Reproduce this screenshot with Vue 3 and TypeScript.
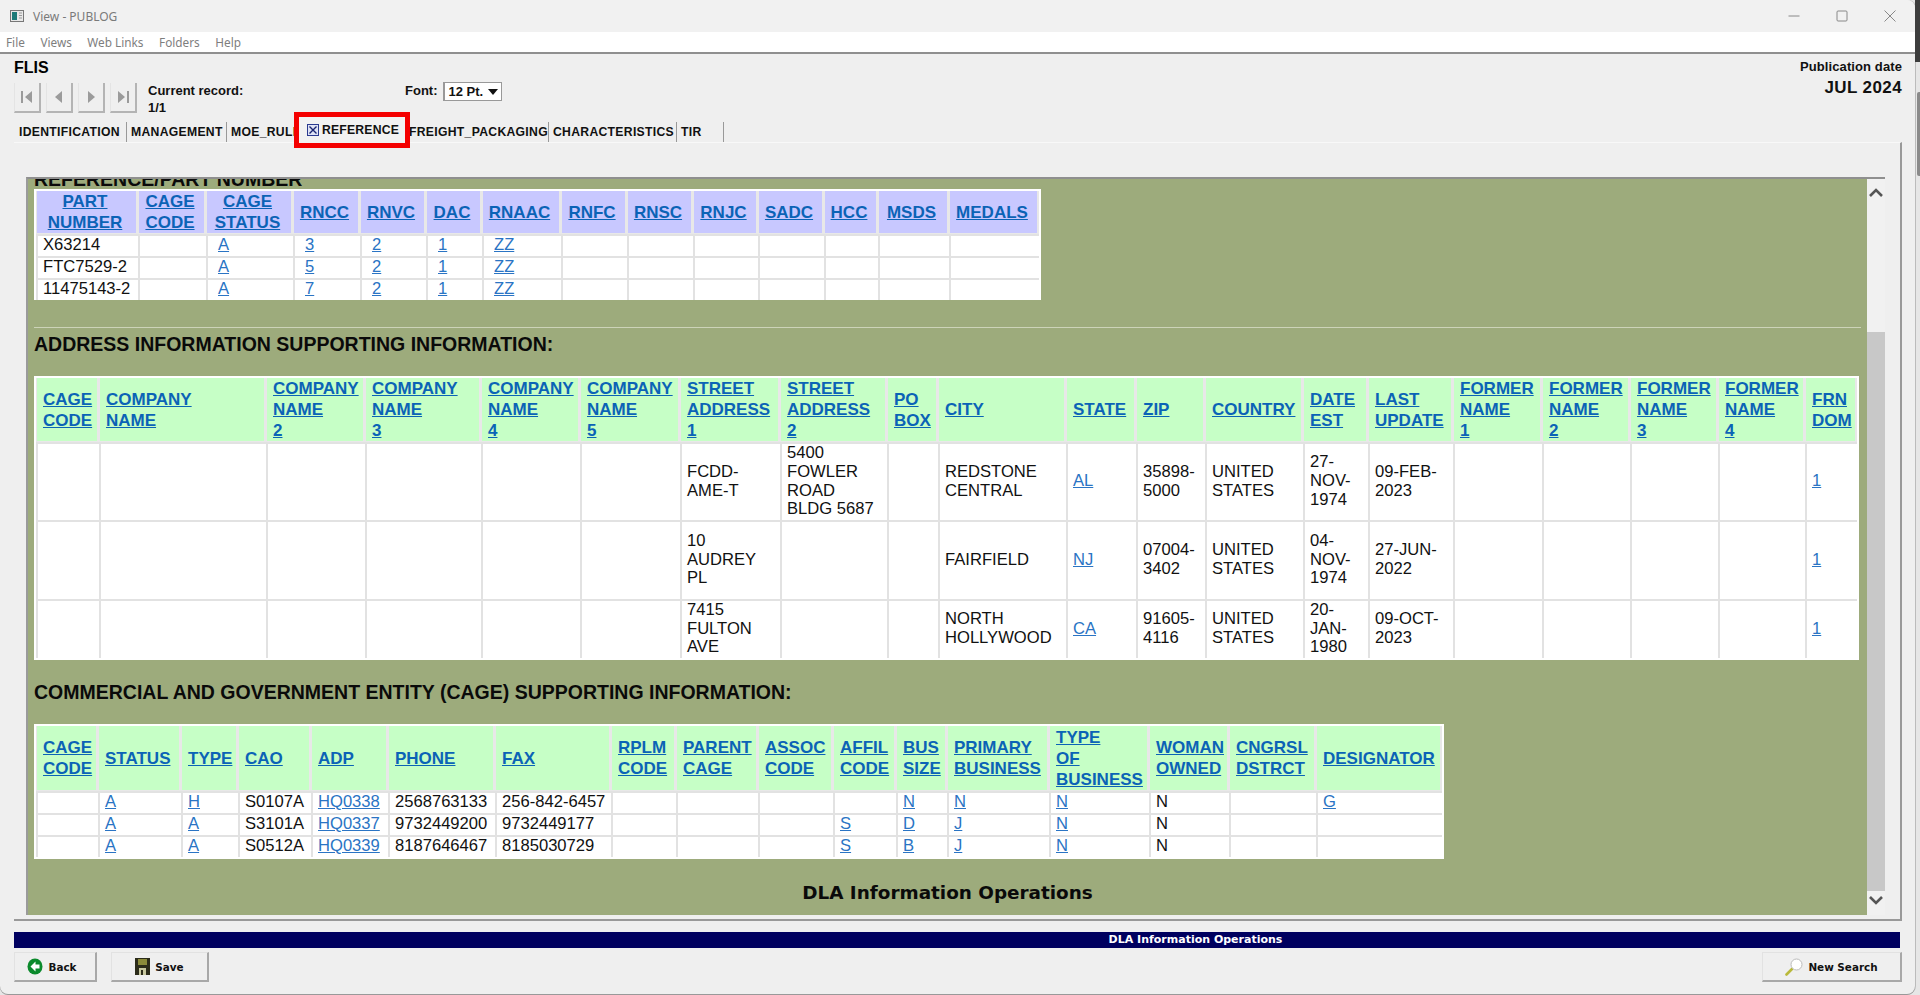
<script setup lang="ts">
interface Col {
  label: string
  width: number
  link?: boolean
}

interface Section {
  title: string
  theme: 'blue' | 'green'
  clipped?: boolean
  headHeight: number
  rowHeights: number[]
  cols: Col[]
  rows: string[][]
}

const menus = ['File', 'Views', 'Web Links', 'Folders', 'Help']

const tabsBefore = [
  { label: 'IDENTIFICATION', width: 108 },
  { label: 'MANAGEMENT', width: 96 }
]

const tabsAfter = [
  { label: 'FREIGHT_PACKAGING', width: 140 },
  { label: 'CHARACTERISTICS', width: 124 },
  { label: 'TIR', width: 43 }
]

const sections: Section[] = [
  {
    title: 'REFERENCE/PART NUMBER',
    theme: 'blue',
    clipped: true,
    headHeight: 43,
    rowHeights: [22, 22, 22],
    cols: [
      { label: 'PART\nNUMBER', width: 102 },
      { label: 'CAGE\nCODE', width: 68 },
      { label: 'CAGE\nSTATUS', width: 87, link: true },
      { label: 'RNCC', width: 67, link: true },
      { label: 'RNVC', width: 66, link: true },
      { label: 'DAC', width: 56, link: true },
      { label: 'RNAAC', width: 79, link: true },
      { label: 'RNFC', width: 66 },
      { label: 'RNSC', width: 66 },
      { label: 'RNJC', width: 65 },
      { label: 'SADC', width: 66 },
      { label: 'HCC', width: 54 },
      { label: 'MSDS', width: 71 },
      { label: 'MEDALS', width: 90 }
    ],
    rows: [
      ['X63214', '', 'A', '3', '2', '1', 'ZZ', '', '', '', '', '', '', ''],
      ['FTC7529-2', '', 'A', '5', '2', '1', 'ZZ', '', '', '', '', '', '', ''],
      ['11475143-2', '', 'A', '7', '2', '1', 'ZZ', '', '', '', '', '', '', '']
    ]
  },
  {
    title: 'ADDRESS INFORMATION SUPPORTING INFORMATION:',
    theme: 'green',
    headHeight: 64,
    rowHeights: [78, 79, 59],
    cols: [
      { label: 'CAGE\nCODE', width: 63 },
      { label: 'COMPANY\nNAME', width: 167 },
      { label: 'COMPANY\nNAME\n2', width: 99 },
      { label: 'COMPANY\nNAME\n3', width: 116 },
      { label: 'COMPANY\nNAME\n4', width: 99 },
      { label: 'COMPANY\nNAME\n5', width: 100 },
      { label: 'STREET\nADDRESS\n1', width: 100 },
      { label: 'STREET\nADDRESS\n2', width: 107 },
      { label: 'PO\nBOX', width: 51 },
      { label: 'CITY', width: 128 },
      { label: 'STATE', width: 70, link: true },
      { label: 'ZIP', width: 69 },
      { label: 'COUNTRY', width: 98 },
      { label: 'DATE\nEST', width: 65 },
      { label: 'LAST\nUPDATE', width: 85 },
      { label: 'FORMER\nNAME\n1', width: 89 },
      { label: 'FORMER\nNAME\n2', width: 88 },
      { label: 'FORMER\nNAME\n3', width: 88 },
      { label: 'FORMER\nNAME\n4', width: 87 },
      { label: 'FRN\nDOM', width: 52, link: true }
    ],
    rows: [
      ['', '', '', '', '', '', 'FCDD-\nAME-T', '5400\nFOWLER\nROAD\nBLDG 5687', '', 'REDSTONE\nCENTRAL', 'AL', '35898-\n5000', 'UNITED\nSTATES', '27-\nNOV-\n1974', '09-FEB-\n2023', '', '', '', '', '1'],
      ['', '', '', '', '', '', '10\nAUDREY\nPL', '', '', 'FAIRFIELD', 'NJ', '07004-\n3402', 'UNITED\nSTATES', '04-\nNOV-\n1974', '27-JUN-\n2022', '', '', '', '', '1'],
      ['', '', '', '', '', '', '7415\nFULTON\nAVE', '', '', 'NORTH\nHOLLYWOOD', 'CA', '91605-\n4116', 'UNITED\nSTATES', '20-\nJAN-\n1980', '09-OCT-\n2023', '', '', '', '', '1']
    ]
  },
  {
    title: 'COMMERCIAL AND GOVERNMENT ENTITY (CAGE) SUPPORTING INFORMATION:',
    theme: 'green',
    headHeight: 65,
    rowHeights: [22, 22, 22],
    cols: [
      { label: 'CAGE\nCODE', width: 62 },
      { label: 'STATUS', width: 83, link: true },
      { label: 'TYPE', width: 57, link: true },
      { label: 'CAO', width: 73 },
      { label: 'ADP', width: 77, link: true },
      { label: 'PHONE', width: 107 },
      { label: 'FAX', width: 116 },
      { label: 'RPLM\nCODE', width: 65 },
      { label: 'PARENT\nCAGE', width: 82 },
      { label: 'ASSOC\nCODE', width: 75 },
      { label: 'AFFIL\nCODE', width: 63, link: true },
      { label: 'BUS\nSIZE', width: 51, link: true },
      { label: 'PRIMARY\nBUSINESS', width: 102, link: true },
      { label: 'TYPE\nOF\nBUSINESS', width: 100, link: true },
      { label: 'WOMAN\nOWNED', width: 80 },
      { label: 'CNGRSL\nDSTRCT', width: 87 },
      { label: 'DESIGNATOR', width: 126, link: true }
    ],
    rows: [
      ['', 'A', 'H', 'S0107A', 'HQ0338', '2568763133', '256-842-6457', '', '', '', '', 'N', 'N', 'N', 'N', '', 'G'],
      ['', 'A', 'A', 'S3101A', 'HQ0337', '9732449200', '9732449177', '', '', '', 'S', 'D', 'J', 'N', 'N', '', ''],
      ['', 'A', 'A', 'S0512A', 'HQ0339', '8187646467', '8185030729', '', '', '', 'S', 'B', 'J', 'N', 'N', '', '']
    ]
  }
]

const tableWidth = (s: Section) => s.cols.reduce((sum, c) => sum + c.width, 0) + 4
</script>

<template>
  <div class="screen">
    <div class="window">
      <header class="titlebar">
        <svg class="app-icon" width="14" height="14" viewBox="0 0 14 14">
          <rect x="0.5" y="1.5" width="13" height="11" fill="#e8e8e8" stroke="#777" />
          <rect x="2" y="3" width="5" height="8" fill="#1c7a78" />
          <path d="M9 4h3M9 6.5h3M9 9h3" stroke="#999" />
        </svg>
        <span class="app-title">View - PUBLOG</span>
        <div class="win-controls">
          <svg width="12" height="12" viewBox="0 0 12 12"><path d="M0.5 6h11" stroke="#888" /></svg>
          <svg width="12" height="12" viewBox="0 0 12 12"><rect x="1" y="1" width="10" height="10" rx="1" fill="none" stroke="#888" /></svg>
          <svg width="12" height="12" viewBox="0 0 12 12"><path d="M0.5 0.5l11 11M11.5 0.5l-11 11" stroke="#888" /></svg>
        </div>
      </header>

      <nav class="menubar">
        <span v-for="m in menus" :key="m">{{ m }}</span>
      </nav>

      <div class="head">
        <div class="head-left">
          <div class="flis">FLIS</div>
          <div class="toolbar">
            <div class="nav-buttons">
              <button class="nav-btn">
                <svg width="16" height="16" viewBox="0 0 16 16"><path d="M2 2h2v12H2zM13 2v12L6 8z" fill="#9b9b9b" /></svg>
              </button>
              <button class="nav-btn">
                <svg width="16" height="16" viewBox="0 0 16 16"><path d="M11 2v12L4 8z" fill="#9b9b9b" /></svg>
              </button>
              <button class="nav-btn">
                <svg width="16" height="16" viewBox="0 0 16 16"><path d="M5 2v12l7-6z" fill="#9b9b9b" /></svg>
              </button>
              <button class="nav-btn">
                <svg width="16" height="16" viewBox="0 0 16 16"><path d="M3 2v12l7-6zM12 2h2v12h-2z" fill="#9b9b9b" /></svg>
              </button>
            </div>
            <div class="record">
              <div>Current record:</div>
              <div>1/1</div>
            </div>
            <label class="font-pick">
              Font:
              <span class="select">12 Pt.<i class="caret"></i></span>
            </label>
          </div>
        </div>
        <div class="pub">
          <div class="pub-label">Publication date</div>
          <div class="pub-date">JUL 2024</div>
        </div>
      </div>

      <div class="tabs">
        <span v-for="t in tabsBefore" :key="t.label" class="tab" :style="{ width: t.width + 'px' }">{{ t.label }}</span>
        <span class="tab tab-cut">MOE_RULE</span>
        <span class="tab-active">
          <svg width="12" height="12" viewBox="0 0 12 12">
            <rect x="0.5" y="0.5" width="11" height="11" fill="#dfe3f5" stroke="#2a3a90" />
            <path d="M2.5 2.5l7 7M9.5 2.5l-7 7" stroke="#1a2470" stroke-width="1.4" />
          </svg>
          REFERENCE
        </span>
        <span v-for="t in tabsAfter" :key="t.label" class="tab" :style="{ width: t.width + 'px' }">{{ t.label }}</span>
      </div>

      <section class="pane">
        <div class="scroller">
          <div class="sheet">
            <template v-for="(s, i) in sections" :key="s.title">
              <hr v-if="i === 1" class="rule" />
              <h2 class="sec-title" :class="{ clipped: s.clipped }">{{ s.title }}</h2>
              <table class="grid" :class="s.theme" :style="{ width: tableWidth(s) + 'px' }">
                <colgroup>
                  <col v-for="c in s.cols" :key="c.label" :style="{ width: c.width + 'px' }" />
                </colgroup>
                <thead>
                  <tr :style="{ height: s.headHeight + 'px' }">
                    <th v-for="c in s.cols" :key="c.label"><a>{{ c.label }}</a></th>
                  </tr>
                </thead>
                <tbody>
                  <tr v-for="(r, ri) in s.rows" :key="ri" :style="{ height: s.rowHeights[ri] + 'px' }">
                    <td v-for="(v, ci) in r" :key="ci">
                      <a v-if="s.cols[ci].link">{{ v }}</a>
                      <template v-else>{{ v }}</template>
                    </td>
                  </tr>
                </tbody>
              </table>
            </template>
            <div class="sheet-foot">DLA Information Operations</div>
          </div>
          <div class="vscroll">
            <svg class="arrow-up" width="16" height="10" viewBox="0 0 16 10"><path d="M2 8l6-6 6 6" fill="none" stroke="#555" stroke-width="2.6" /></svg>
            <div class="thumb"></div>
            <svg class="arrow-down" width="16" height="10" viewBox="0 0 16 10"><path d="M2 2l6 6 6-6" fill="none" stroke="#555" stroke-width="2.6" /></svg>
          </div>
        </div>
      </section>

      <div class="statusbar">DLA Information Operations</div>

      <footer class="actions">
        <button class="act back">
          <svg width="16" height="17" viewBox="0 0 16 17">
            <ellipse cx="8" cy="8.5" rx="7.5" ry="8" fill="#0b8a2c" />
            <path d="M8.5 3.5L3.5 8.5l5 5v-3h4v-4h-4z" fill="#fff" />
          </svg>
          Back
        </button>
        <button class="act save">
          <svg width="15" height="17" viewBox="0 0 15 17">
            <rect width="15" height="17" fill="#2b2b1a" />
            <rect x="3" y="1" width="9" height="6" fill="#8a8a3a" />
            <rect x="4" y="10" width="7" height="7" fill="#c8c8a0" />
            <rect x="6" y="12" width="2" height="5" fill="#2b2b1a" />
          </svg>
          Save
        </button>
        <button class="act search">
          <svg width="18" height="18" viewBox="0 0 18 18">
            <path d="M7 11l-5.5 5.5" stroke="#b9b93a" stroke-width="2.6" stroke-linecap="round" />
            <circle cx="11.5" cy="6.5" r="5.5" fill="#fff" stroke="#bbb" />
          </svg>
          New Search
        </button>
      </footer>
    </div>

    <aside class="desk-edge">
      <div class="desk-dark"></div>
      <div class="desk-thumb"></div>
    </aside>
  </div>
</template>

<style scoped>
.screen {
  display: flex;
  width: 1920px;
  height: 995px;
  background: #e6e6e6;
  overflow: hidden;
  font-family: "Liberation Sans", Arial, sans-serif;
  color: #111;
}

.window {
  width: 1915px;
  height: 994px;
  background: #efefef;
  border-radius: 0 8px 8px 8px;
  box-shadow: 0 1px 0 #999, 1px 0 0 #bbb;
  display: flex;
  flex-direction: column;
}

.titlebar {
  height: 32px;
  flex: none;
  display: flex;
  align-items: center;
  padding-left: 10px;
  background: #f1f1f1;
  border-radius: 0 8px 0 0;
}

.app-title {
  margin-left: 9px;
  font: 12px "Noto Sans", sans-serif;
  color: #7a7a7a;
}

.win-controls {
  margin-left: auto;
  display: flex;
  gap: 36px;
  padding-right: 19px;
}

.menubar {
  height: 20px;
  flex: none;
  box-sizing: content-box;
  background: #fff;
  border-bottom: 2px solid #8f8f8f;
  display: flex;
  align-items: center;
  gap: 15.5px;
  padding-left: 6px;
  font: 11.8px "Noto Sans", sans-serif;
  color: #7e7e7e;
}

.head {
  flex: none;
  height: 68px;
  display: flex;
  justify-content: space-between;
  padding: 4px 13px 0 14px;
  box-sizing: border-box;
  font-weight: bold;
}

.flis {
  font-size: 16px;
  line-height: 20px;
  color: #000;
}

.toolbar {
  display: flex;
  margin-top: 5px;
}

.nav-buttons {
  display: flex;
  gap: 5px;
  width: 134px;
}

.nav-btn {
  width: 27px;
  height: 30px;
  padding: 0;
  background: #efefef;
  border: 0;
  border-right: 2px solid #b4b4b4;
  border-bottom: 2px solid #b4b4b4;
  border-left: 1px solid #e4e4e4;
  display: flex;
  align-items: center;
  justify-content: center;
}

.record {
  font-size: 13px;
  line-height: 17px;
  margin-top: -1px;
  color: #111;
  width: 257px;
}

.font-pick {
  display: flex;
  align-items: flex-start;
  gap: 6px;
  font-size: 13px;
  line-height: 17px;
  margin-top: -1px;
}

.select {
  display: flex;
  align-items: center;
  justify-content: space-between;
  width: 59px;
  height: 19px;
  box-sizing: border-box;
  padding: 0 3px 0 3px;
  background: #fff;
  border: 1px solid #999;
  border-left-width: 2px;
}

.caret {
  width: 0;
  height: 0;
  border-left: 5px solid transparent;
  border-right: 5px solid transparent;
  border-top: 6px solid #111;
}

.pub {
  text-align: right;
}

.pub-label {
  font-size: 13px;
  line-height: 17px;
  letter-spacing: 0.1px;
}

.pub-date {
  font-size: 17px;
  line-height: 20px;
  margin-top: 3px;
  letter-spacing: 0.4px;
}

.tabs {
  flex: none;
  height: 20px;
  display: flex;
  align-items: center;
  margin-left: 19px;
  font-size: 12.2px;
  font-weight: bold;
  letter-spacing: 0.3px;
  color: #111;
}

.tab {
  flex: none;
  height: 20px;
  line-height: 20px;
  box-sizing: border-box;
  margin-right: 4px;
  border-right: 1px solid #999;
  white-space: nowrap;
}

.tab-cut {
  width: 63px;
  margin: 0;
  border: 0;
  overflow: hidden;
}

.tab-active {
  flex: none;
  width: 116px;
  height: 36px;
  box-sizing: border-box;
  border: 5px solid #f40000;
  background: #f2f2f2;
  display: flex;
  align-items: center;
  gap: 3px;
  padding-left: 8px;
  margin-right: -1px;
  margin-bottom: 4px;
  position: relative;
  z-index: 1;
  white-space: nowrap;
  font-size: 12.2px;
  letter-spacing: 0.2px;
}

.pane {
  flex: none;
  height: 779px;
  box-sizing: border-box;
  margin-left: 14px;
  width: 1888px;
  padding: 34px 15px 4px 12px;
  border-top: 1px solid #f8f8f8;
  border-right: 2px solid #999;
  border-bottom: 2px solid #999;
}

.scroller {
  height: 100%;
  display: flex;
  border-top: 2px solid #8f8f8f;
  border-left: 2px solid #9a9a9a;
  box-sizing: border-box;
}

.sheet {
  flex: 1;
  min-width: 0;
  background: #9dab7c;
  padding-left: 6px;
  overflow: hidden;
}

.sec-title {
  margin: 0 0 20px;
  height: 24px;
  line-height: 24px;
  font-size: 19.5px;
  font-weight: bold;
  color: #0a0a0a;
}

.sec-title.clipped {
  margin-top: -12px;
  margin-bottom: -2px;
}

.rule {
  margin: 27px 6px 4px 0;
  border: 0;
  height: 1px;
  background: #ccd3b8;
}

.grid {
  table-layout: fixed;
  border-collapse: separate;
  border-spacing: 0;
  background: #fff;
  border: 2px solid #fff;
  box-sizing: border-box;
  margin-bottom: 20px;
}

.grid.blue {
  border-bottom-width: 0;
}

.grid th,
.grid td {
  box-sizing: border-box;
  padding: 0 3px 0 5px;
  vertical-align: middle;
  white-space: pre-line;
  overflow: hidden;
}

.grid th {
  font-size: 17px;
  line-height: 21px;
  font-weight: bold;
  text-align: left;
  padding-left: 6px;
  padding-right: 2px;
  border: 1px solid #e8e8e8;
  border-width: 0 2px 1px 1px;
}

.grid.blue th {
  background: #c8c8ff;
  text-align: center;
  padding: 0 6px 0 3px;
}

.grid.green th {
  background: #c6ffc6;
}

.grid td {
  font-size: 16.6px;
  line-height: 18.7px;
  padding-bottom: 1px;
  color: #111;
  border-left: 2px solid #e2e2e2;
  border-top: 2px solid #e2e2e2;
}

.grid a {
  color: #2a74c4;
  text-decoration: underline;
}

.grid th a {
  color: #0b63b6;
}

.grid.blue td a {
  margin-left: 5px;
}

.sheet-foot {
  font: bold 18.4px "DejaVu Sans", sans-serif;
  text-align: center;
  margin: 23px 0 0 -6px;
  color: #0a0a0a;
}

.vscroll {
  flex: none;
  width: 18px;
  background: #f1f1f1;
  display: flex;
  flex-direction: column;
  align-items: center;
}

.arrow-up {
  margin-top: 9px;
}

.thumb {
  flex: 1;
  width: 100%;
  background: #c8c8c8;
  margin-top: 134px;
}

.arrow-down {
  margin: 4px 0 10px;
}

.statusbar {
  flex: none;
  margin: 11px 15px 0 14px;
  height: 16px;
  background: #00005f;
  color: #fff;
  text-align: center;
  font: bold 11px/16px "DejaVu Sans", sans-serif;
  padding-left: 477px;
}

.actions {
  flex: none;
  display: flex;
  margin: 4px 13px 0 14px;
  gap: 14px;
}

.act {
  height: 30px;
  box-sizing: border-box;
  padding: 0;
  background: #efefef;
  border: 0;
  border-top: 1px solid #e2e2e2;
  border-left: 1px solid #e2e2e2;
  border-right: 2px solid #a8a8a8;
  border-bottom: 2px solid #a8a8a8;
  display: flex;
  align-items: center;
  justify-content: center;
  gap: 5px;
  font: bold 10.4px "DejaVu Sans", sans-serif;
  color: #111;
}

.back {
  width: 83px;
  padding-right: 6px;
}

.save {
  width: 98px;
}

.search {
  width: 140px;
  margin-left: auto;
}

.desk-edge {
  flex: 1;
  position: relative;
}

.desk-dark {
  height: 62px;
  background: #3d3d3d;
}

.desk-thumb {
  position: absolute;
  top: 92px;
  right: 0;
  width: 3px;
  height: 84px;
  background: #8a8a8a;
  border-radius: 2px 0 0 2px;
}
</style>

<style>
html,
body {
  margin: 0;
  overflow: hidden;
}
</style>
